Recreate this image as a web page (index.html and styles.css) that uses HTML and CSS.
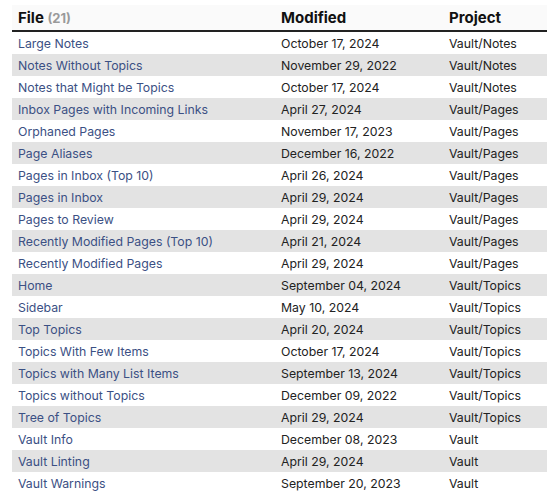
FILE: index.html
```html
<!DOCTYPE html>
<html>
<head>
<meta charset="utf-8">
<link rel="stylesheet" href="styles.css">
</head>
<body>
<table class="tbl">
<thead>
<tr><th class="c1">File <span class="count">(21)</span></th><th class="c2">Modified</th><th class="c3">Project</th></tr>
</thead>
<tbody>
<tr><td><a>Large Notes</a></td><td>October 17, 2024</td><td>Vault/Notes</td></tr>
<tr><td><a>Notes Without Topics</a></td><td>November 29, 2022</td><td>Vault/Notes</td></tr>
<tr><td><a>Notes that Might be Topics</a></td><td>October 17, 2024</td><td>Vault/Notes</td></tr>
<tr><td><a>Inbox Pages with Incoming Links</a></td><td>April 27, 2024</td><td>Vault/Pages</td></tr>
<tr><td><a>Orphaned Pages</a></td><td>November 17, 2023</td><td>Vault/Pages</td></tr>
<tr><td><a>Page Aliases</a></td><td>December 16, 2022</td><td>Vault/Pages</td></tr>
<tr><td><a>Pages in Inbox (Top 10)</a></td><td>April 26, 2024</td><td>Vault/Pages</td></tr>
<tr><td><a>Pages in Inbox</a></td><td>April 29, 2024</td><td>Vault/Pages</td></tr>
<tr><td><a>Pages to Review</a></td><td>April 29, 2024</td><td>Vault/Pages</td></tr>
<tr><td><a>Recently Modified Pages (Top 10)</a></td><td>April 21, 2024</td><td>Vault/Pages</td></tr>
<tr><td><a>Recently Modified Pages</a></td><td>April 29, 2024</td><td>Vault/Pages</td></tr>
<tr><td><a>Home</a></td><td>September 04, 2024</td><td>Vault/Topics</td></tr>
<tr><td><a>Sidebar</a></td><td>May 10, 2024</td><td>Vault/Topics</td></tr>
<tr><td><a>Top Topics</a></td><td>April 20, 2024</td><td>Vault/Topics</td></tr>
<tr><td><a>Topics With Few Items</a></td><td>October 17, 2024</td><td>Vault/Topics</td></tr>
<tr><td><a>Topics with Many List Items</a></td><td>September 13, 2024</td><td>Vault/Topics</td></tr>
<tr><td><a>Topics without Topics</a></td><td>December 09, 2022</td><td>Vault/Topics</td></tr>
<tr><td><a>Tree of Topics</a></td><td>April 29, 2024</td><td>Vault/Topics</td></tr>
<tr><td><a>Vault Info</a></td><td>December 08, 2023</td><td>Vault</td></tr>
<tr><td><a>Vault Linting</a></td><td>April 29, 2024</td><td>Vault</td></tr>
<tr><td><a>Vault Warnings</a></td><td>September 20, 2023</td><td>Vault</td></tr>
</tbody>
</table>
</body>
</html>
```
FILE: styles.css
```css
html, body { margin: 0; padding: 0; background: #fff; }
body { padding: 5px 0 0 12px; font-family: Inter, "Noto Sans", sans-serif; color: #222; }
.tbl { border-collapse: collapse; width: 535px; font-size: 12.3px; }
.tbl th { text-align: left; font-size: 15px; font-weight: 700; color: #111; background: #fafafa; height: 25px; padding: 0 6px; border-bottom: 2px solid #222; vertical-align: middle; }
.tbl .count { color: #9a9a9a; font-size: 13px; font-weight: 700; }
.c1 { width: 251px; }
.c2 { width: 156px; }
.tbl td { height: 22px; padding: 0 6px; vertical-align: middle; white-space: nowrap; }
.tbl tbody tr:nth-child(even) td { background: #e3e3e3; }
.tbl a { color: #3b5084; text-decoration: none; }
```
